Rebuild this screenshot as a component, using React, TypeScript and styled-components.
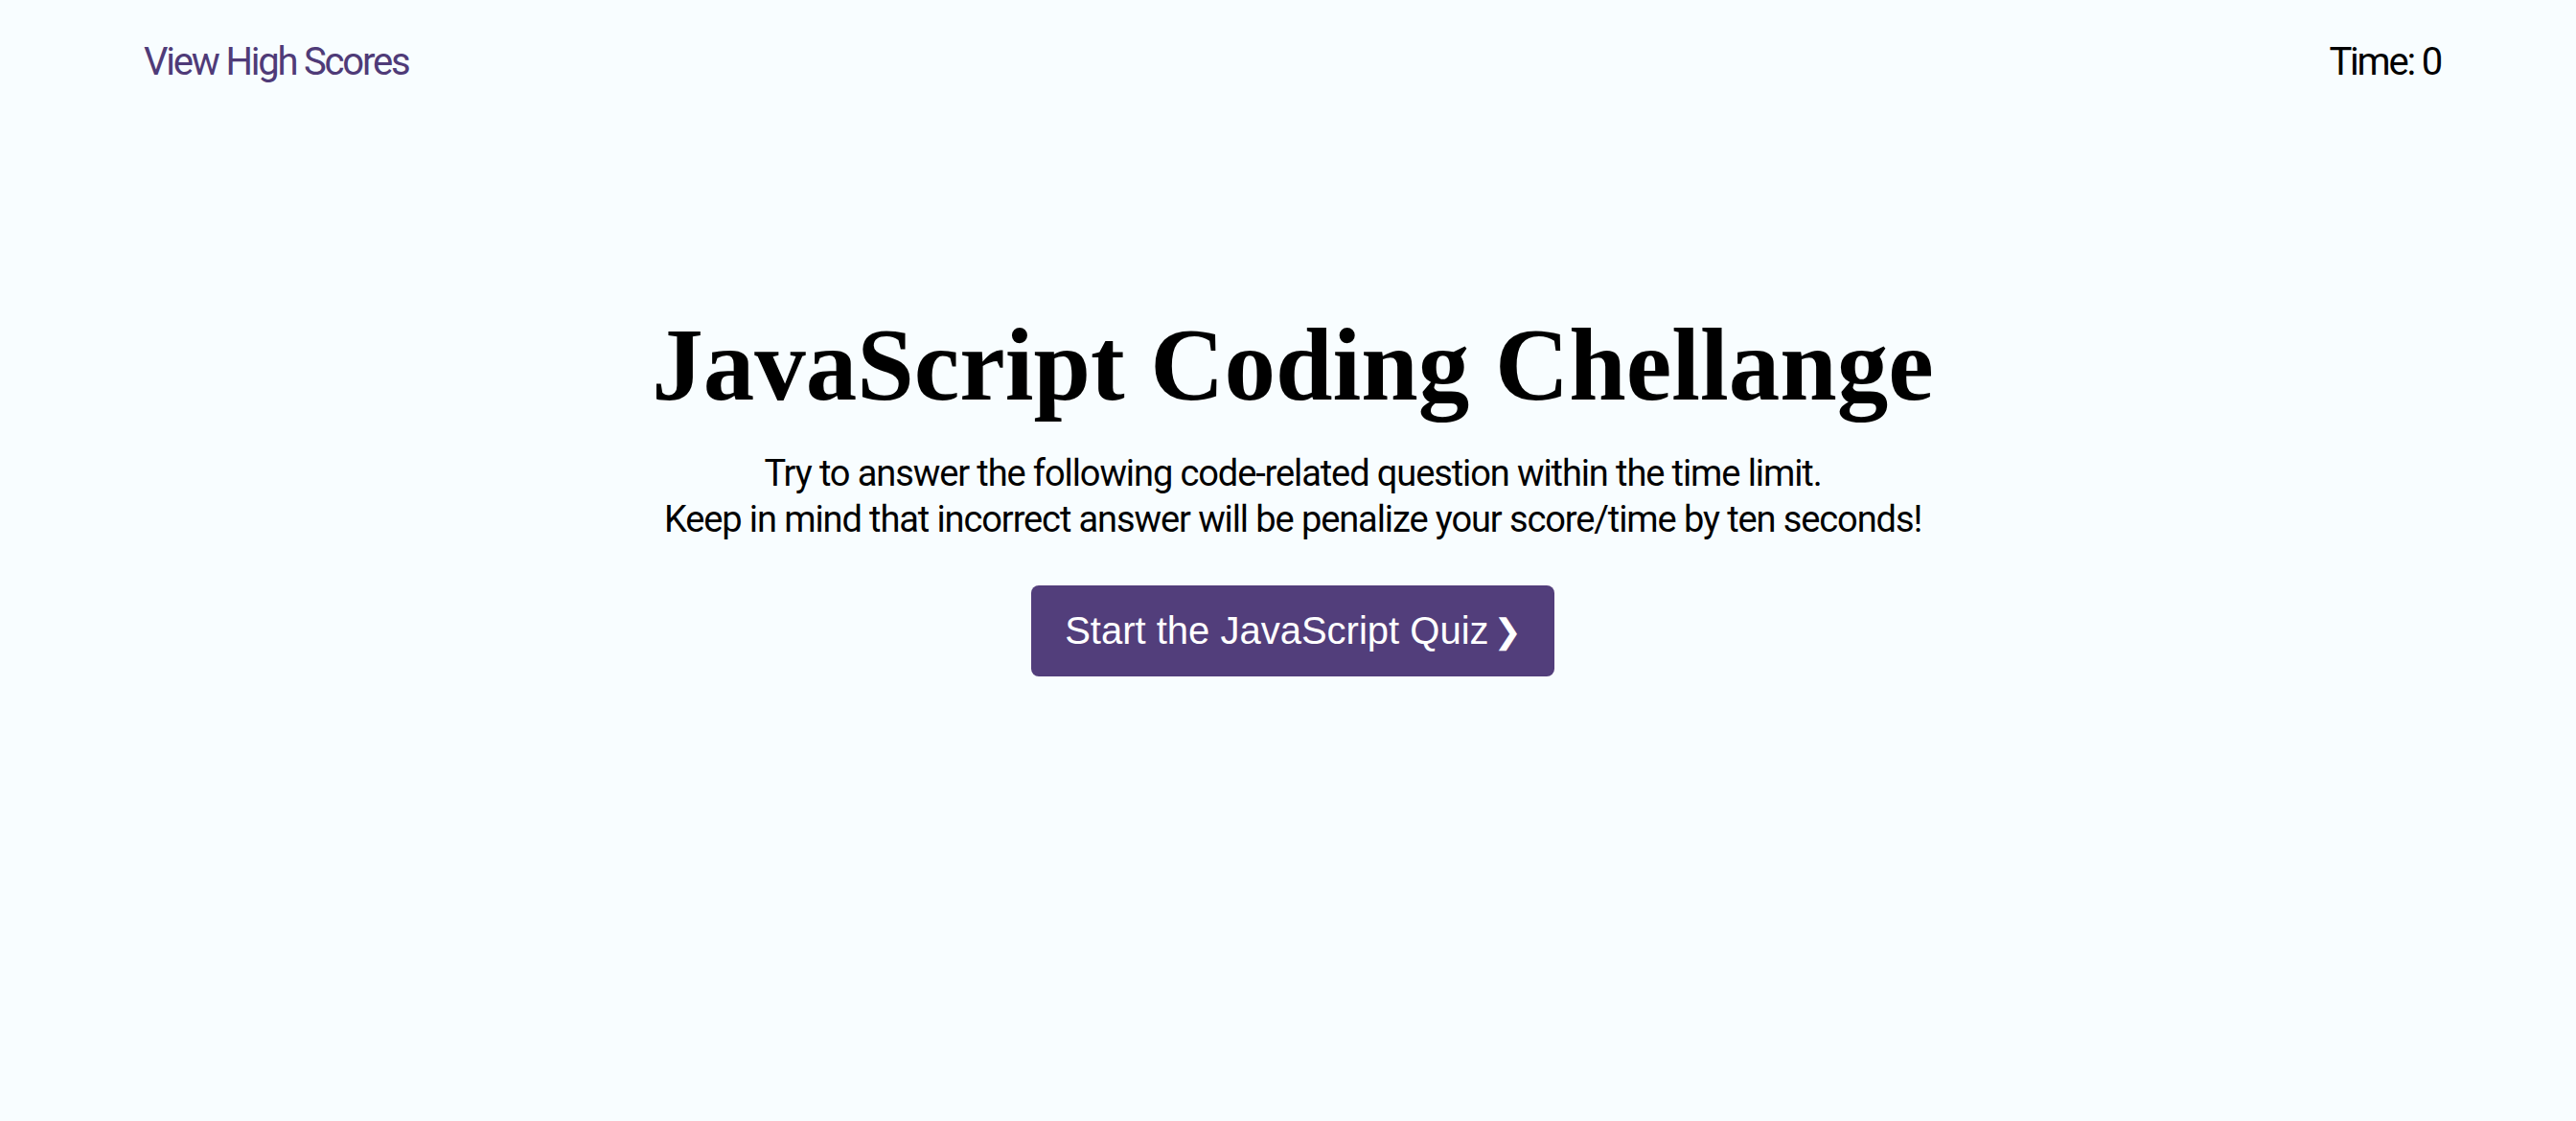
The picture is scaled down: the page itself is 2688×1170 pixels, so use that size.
import styled, { createGlobalStyle } from "styled-components";

const GlobalStyle = createGlobalStyle`
  html, body {
    margin: 0;
    padding: 0;
    background: #f8fdff;
  }
  body {
    font-family: Roboto, "Liberation Sans", sans-serif;
    color: #000;
  }
`;

const Page = styled.div`
  min-height: 1170px;
  background: #f8fdff;
`;

const Header = styled.header`
  display: flex;
  justify-content: space-between;
  align-items: flex-start;
  padding: 41px 141px 0 150px;
  font-size: 40px;
  letter-spacing: -2.2px;
`;

const ScoresLink = styled.a`
  color: #4f3b78;
  text-decoration: none;
  cursor: pointer;
`;

const Timer = styled.div`
  color: #000;
`;

const Main = styled.main`
  display: flex;
  flex-direction: column;
  align-items: center;
  padding: 229px 0 0 10px;
`;

const Title = styled.h1`
  margin: 0;
  font-family: "Liberation Serif", "DejaVu Serif", serif;
  font-weight: 900;
  font-size: 107px;
  line-height: 129px;
  letter-spacing: 0;
`;

const Description = styled.p`
  margin: 24px 0 0;
  text-align: center;
  font-size: 38px;
  line-height: 48px;
  letter-spacing: -1.1px;
`;

const StartButton = styled.button`
  display: flex;
  align-items: center;
  gap: 5px;
  margin-top: 45px;
  height: 95px;
  padding: 0 34px 0 35px;
  border: none;
  border-radius: 8px;
  background: #523e7b;
  color: #fff;
  font-family: "Liberation Sans", Arial, sans-serif;
  font-size: 40px;
  cursor: pointer;
`;

const Chevron = styled.span`
  font-family: "DejaVu Sans", sans-serif;
  font-weight: 700;
  font-size: 35px;
`;

export default function App() {
  return (
    <Page>
      <GlobalStyle />
      <Header>
        <ScoresLink>View High Scores</ScoresLink>
        <Timer>Time: 0</Timer>
      </Header>
      <Main>
        <Title>JavaScript Coding Chellange</Title>
        <Description>
          Try to answer the following code-related question within the time limit.
          <br />
          Keep in mind that incorrect answer will be penalize your score/time by ten seconds!
        </Description>
        <StartButton>
          <span>Start the JavaScript Quiz</span>
          <Chevron>❯</Chevron>
        </StartButton>
      </Main>
    </Page>
  );
}
